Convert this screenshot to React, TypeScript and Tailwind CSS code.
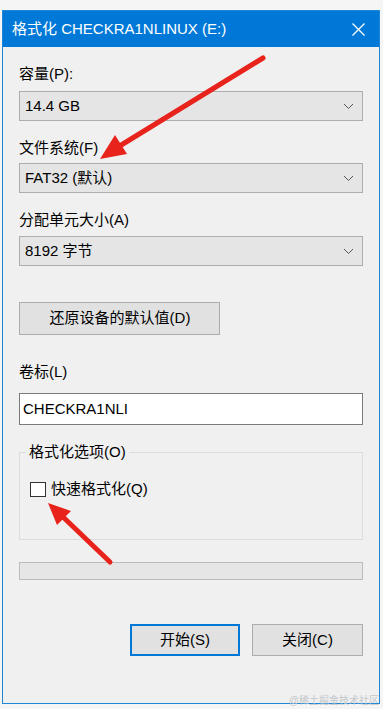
import React from 'react';

const font = { fontFamily: '"Liberation Sans", "Noto Sans CJK SC", sans-serif' };

const Chevron: React.FC = () => (
  <svg width="11" height="7" viewBox="0 0 11 7" className="shrink-0">
    <path d="M1 1 L5.5 5.5 L10 1" fill="none" stroke="#555" strokeWidth="1" />
  </svg>
);

const Combo: React.FC<{ value: string }> = ({ value }) => (
  <div className="flex h-[30px] items-center justify-between border border-[#adadad] bg-[#e5e5e5] pl-[5px] pr-[8px] text-[15px] text-black">
    <span>{value}</span>
    <Chevron />
  </div>
);

const Label: React.FC<{ text: string; className?: string }> = ({ text, className }) => (
  <div className={`h-[20px] text-[15px] leading-[20px] text-black ${className ?? ''}`}>{text}</div>
);

const App: React.FC = () => {
  return (
    <div className="relative h-[709px] w-[383px] overflow-hidden bg-[#f5f5f5] pl-[2px] pt-[10px]" style={font}>
      {/* dialog window */}
      <div className="flex h-[694px] w-[378px] flex-col border border-[#1f87d8] bg-[#f0f0f0]">
        {/* title bar */}
        <div className="flex h-[36px] items-center justify-between bg-[#0078d7] pl-[9px] pr-[14px] text-[15px] text-white">
          <span>格式化 CHECKRA1NLINUX (E:)</span>
          <svg width="13" height="13" viewBox="0 0 13 13">
            <path d="M0.5 0.5 L12.5 12.5 M12.5 0.5 L0.5 12.5" stroke="#fff" strokeWidth="1.3" />
          </svg>
        </div>

        {/* body */}
        <div className="flex flex-col px-[16px]">
          <Label text="容量(P):" className="mt-[17px]" />
          <div className="mt-[7px]"><Combo value="14.4 GB" /></div>

          <Label text="文件系统(F)" className="mt-[17px]" />
          <div className="mt-[5px]"><Combo value="FAT32 (默认)" /></div>

          <Label text="分配单元大小(A)" className="mt-[17px]" />
          <div className="mt-[6px]"><Combo value="8192 字节" /></div>

          <button className="mt-[36px] flex h-[33px] w-[201px] items-center justify-center border border-[#adadad] bg-[#e1e1e1] pl-[1px] text-[15px] text-black">
            还原设备的默认值(D)
          </button>

          <Label text="卷标(L)" className="mt-[27px]" />
          <div className="mt-[11px] flex h-[32px] items-center border border-[#7a7a7a] bg-white pl-[3px] text-[15px] text-black">
            CHECKRA1NLI
          </div>

          {/* group box */}
          <div className="relative mt-[27px] h-[88px] border border-[#dcdcdc]">
            <span className="absolute -top-[11px] left-[6px] bg-[#f0f0f0] px-[3px] text-[15px] leading-[20px] text-black">
              格式化选项(O)
            </span>
            <div className="ml-[10px] mt-[26px] flex items-center gap-[5px]">
              <div className="h-[15px] w-[16px] border border-[#333] bg-white" />
              <span className="text-[15px] leading-[20px] text-black">快速格式化(Q)</span>
            </div>
          </div>

          {/* progress bar */}
          <div className="mt-[22px] h-[18px] border border-[#bcbcbc] bg-[#e6e6e6]" />

          {/* buttons */}
          <div className="mt-[44px] flex justify-end gap-[12px]">
            <button className="flex h-[32px] w-[110px] items-center justify-center border-2 border-[#0078d7] bg-[#e1e1e1] text-[15px] text-black">
              开始(S)
            </button>
            <button className="flex h-[32px] w-[111px] items-center justify-center border border-[#adadad] bg-[#e1e1e1] text-[15px] text-black">
              关闭(C)
            </button>
          </div>
        </div>
      </div>

      {/* annotation arrows */}
      <svg className="pointer-events-none absolute left-0 top-0" width="383" height="709" viewBox="0 0 383 709">
        <line x1="263" y1="58" x2="118" y2="147" stroke="#e8231c" strokeWidth="5" strokeLinecap="round" />
        <polygon points="100,159 127,154 115,135" fill="#e8231c" />
        <line x1="110" y1="562" x2="62" y2="516" stroke="#e8231c" strokeWidth="5" strokeLinecap="round" />
        <polygon points="48,503 71,511 57,525" fill="#e8231c" />
      </svg>

      {/* watermark */}
      <span className="absolute right-[4px] top-[695px] text-[10px] leading-[12px] text-[#c4c8cc]">@稀土掘金技术社区</span>
    </div>
  );
};

export default App;
